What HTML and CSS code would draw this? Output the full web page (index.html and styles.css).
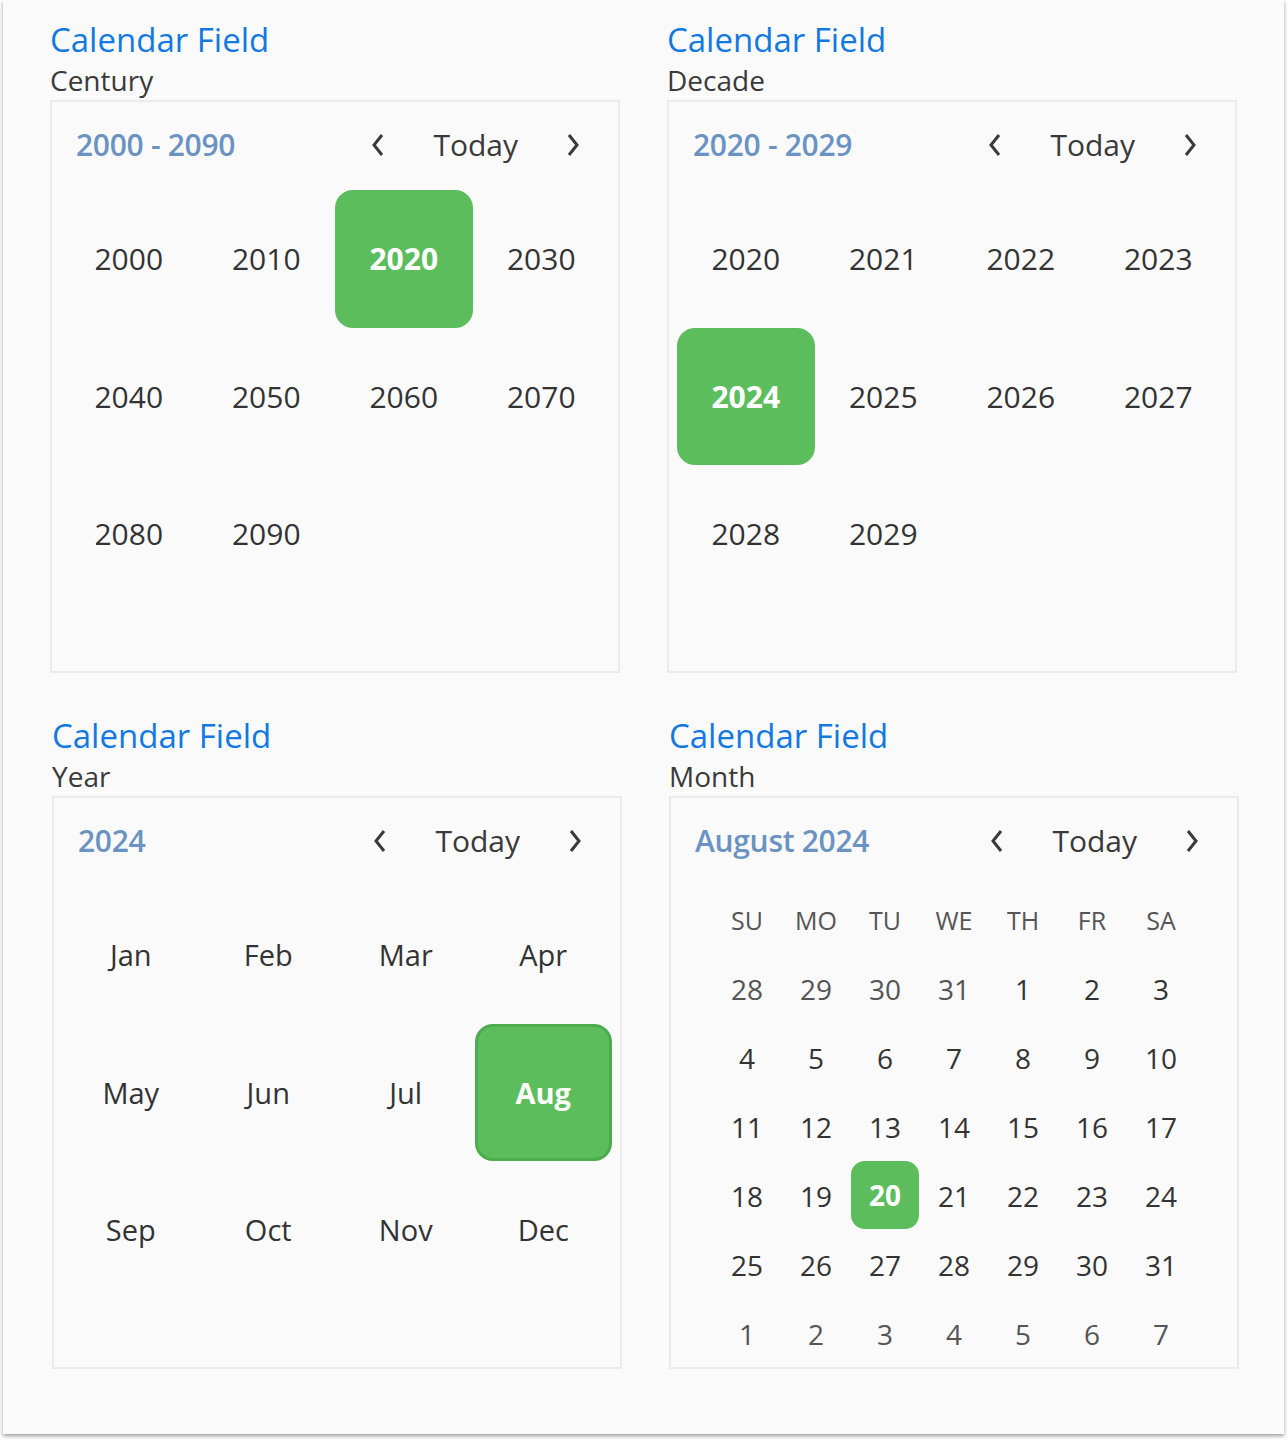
FILE: index.html
```html
<!DOCTYPE html>
<html lang="en">
<head>
  <meta charset="UTF-8">
  <meta name="viewport" content="width=device-width, initial-scale=1.0">
  <title>Calendar Field</title>
  <link rel="stylesheet" href="styles.css">
</head>
<body>
  <div class="panel">
    <div class="field">
      <div class="field_title">Calendar Field</div>
      <div class="field_sub">Century</div>
      <div class="calendar">
        <div class="cal_head">
          <div class="cal_title">2000 - 2090</div>
          <div class="cal_nav">
            <span class="nav_btn"><svg width="16" height="26" viewBox="0 0 16 26"><polyline points="12,3 4,13 12,23" /></svg></span>
            <span class="today">Today</span>
            <span class="nav_btn"><svg width="16" height="26" viewBox="0 0 16 26"><polyline points="4,3 12,13 4,23" /></svg></span>
          </div>
        </div>
        <div class="cal_grid big">
          <div class="cell">2000</div>
          <div class="cell">2010</div>
          <div class="cell selected">2020</div>
          <div class="cell">2030</div>
          <div class="cell">2040</div>
          <div class="cell">2050</div>
          <div class="cell">2060</div>
          <div class="cell">2070</div>
          <div class="cell">2080</div>
          <div class="cell">2090</div>
        </div>
      </div>
    </div>

    <div class="field">
      <div class="field_title">Calendar Field</div>
      <div class="field_sub">Decade</div>
      <div class="calendar">
        <div class="cal_head">
          <div class="cal_title">2020 - 2029</div>
          <div class="cal_nav">
            <span class="nav_btn"><svg width="16" height="26" viewBox="0 0 16 26"><polyline points="12,3 4,13 12,23" /></svg></span>
            <span class="today">Today</span>
            <span class="nav_btn"><svg width="16" height="26" viewBox="0 0 16 26"><polyline points="4,3 12,13 4,23" /></svg></span>
          </div>
        </div>
        <div class="cal_grid big">
          <div class="cell">2020</div>
          <div class="cell">2021</div>
          <div class="cell">2022</div>
          <div class="cell">2023</div>
          <div class="cell selected">2024</div>
          <div class="cell">2025</div>
          <div class="cell">2026</div>
          <div class="cell">2027</div>
          <div class="cell">2028</div>
          <div class="cell">2029</div>
        </div>
      </div>
    </div>

    <div class="field lower">
      <div class="field_title">Calendar Field</div>
      <div class="field_sub">Year</div>
      <div class="calendar">
        <div class="cal_head">
          <div class="cal_title">2024</div>
          <div class="cal_nav">
            <span class="nav_btn"><svg width="16" height="26" viewBox="0 0 16 26"><polyline points="12,3 4,13 12,23" /></svg></span>
            <span class="today">Today</span>
            <span class="nav_btn"><svg width="16" height="26" viewBox="0 0 16 26"><polyline points="4,3 12,13 4,23" /></svg></span>
          </div>
        </div>
        <div class="cal_grid big months">
          <div class="cell">Jan</div>
          <div class="cell">Feb</div>
          <div class="cell">Mar</div>
          <div class="cell">Apr</div>
          <div class="cell">May</div>
          <div class="cell">Jun</div>
          <div class="cell">Jul</div>
          <div class="cell selected focused">Aug</div>
          <div class="cell">Sep</div>
          <div class="cell">Oct</div>
          <div class="cell">Nov</div>
          <div class="cell">Dec</div>
        </div>
      </div>
    </div>

    <div class="field lower">
      <div class="field_title">Calendar Field</div>
      <div class="field_sub">Month</div>
      <div class="calendar">
        <div class="cal_head">
          <div class="cal_title">August 2024</div>
          <div class="cal_nav">
            <span class="nav_btn"><svg width="16" height="26" viewBox="0 0 16 26"><polyline points="12,3 4,13 12,23" /></svg></span>
            <span class="today">Today</span>
            <span class="nav_btn"><svg width="16" height="26" viewBox="0 0 16 26"><polyline points="4,3 12,13 4,23" /></svg></span>
          </div>
        </div>
        <div class="cal_grid days">
          <div class="wday">SU</div><div class="wday">MO</div><div class="wday">TU</div><div class="wday">WE</div><div class="wday">TH</div><div class="wday">FR</div><div class="wday">SA</div>
          <div class="cell other">28</div><div class="cell other">29</div><div class="cell other">30</div><div class="cell other">31</div><div class="cell">1</div><div class="cell">2</div><div class="cell">3</div>
          <div class="cell">4</div><div class="cell">5</div><div class="cell">6</div><div class="cell">7</div><div class="cell">8</div><div class="cell">9</div><div class="cell">10</div>
          <div class="cell">11</div><div class="cell">12</div><div class="cell">13</div><div class="cell">14</div><div class="cell">15</div><div class="cell">16</div><div class="cell">17</div>
          <div class="cell">18</div><div class="cell">19</div><div class="cell selected">20</div><div class="cell">21</div><div class="cell">22</div><div class="cell">23</div><div class="cell">24</div>
          <div class="cell">25</div><div class="cell">26</div><div class="cell">27</div><div class="cell">28</div><div class="cell">29</div><div class="cell">30</div><div class="cell">31</div>
          <div class="cell other">1</div><div class="cell other">2</div><div class="cell other">3</div><div class="cell other">4</div><div class="cell other">5</div><div class="cell other">6</div><div class="cell other">7</div>
        </div>
      </div>
    </div>
  </div>
</body>
</html>
```

FILE: styles.css
```css
* {margin: 0; padding: 0; box-sizing: border-box;}
body {background: #fff; font-family: "Open Sans", "Noto Sans", sans-serif; color: #333; padding-bottom: 9px;}

.panel {
  margin: 0 4px 0 3px;
  height: 1434px;
  padding: 20px 0 0 47px;
  background: #fafafa;
  box-shadow: 0 2px 4px rgba(0, 0, 0, 0.4);
  display: grid;
  grid-template-columns: 570px 570px;
  grid-template-rows: 653px 653px;
  column-gap: 47px;
  row-gap: 43px;
  align-content: start;
}

.field {width: 570px;}
.field.lower {margin-left: 2px;}

.field_title {font-size: 33px; line-height: 40px; color: #1279e2;}
.field_sub {font-size: 28px; line-height: 40px; color: #3a3a3a;}

.calendar {height: 573px; border: 2px solid #ebebeb; background: #fafafa;}

.cal_head {height: 87px; display: flex; align-items: center; justify-content: space-between; padding: 0 25px 0 24px;}
.cal_title {font-size: 30px; font-weight: 600; color: #6a93c4; letter-spacing: -0.3px; margin-top: -2px;}
.cal_nav {display: flex; align-items: center; margin-top: -2px;}
.nav_btn {width: 40px; height: 40px; display: flex; align-items: center; justify-content: center;}
.nav_btn svg polyline {fill: none; stroke: #3a3a3a; stroke-width: 3;}
.today {font-size: 30px; margin: 0 35px; color: #3a3a3a;}

.cal_grid {display: grid; justify-content: center;}
.cal_grid.big {grid-template-columns: repeat(4, 137.5px); grid-auto-rows: 137.5px; margin-top: 1px;}
.cal_grid.big .cell {font-size: 30px;}
.cal_grid.months .cell {font-size: 29px;}

.cell {display: flex; align-items: center; justify-content: center; color: #333;}
.cell.selected {background: #5cbd5c; color: #fff; font-weight: 700; border-radius: 18px;}
.cell.focused {border: 3px solid #4eab4e;}

.cal_grid.days {grid-template-columns: repeat(7, 69px); grid-auto-rows: 69px;}
.cal_grid.days .wday {display: flex; align-items: center; justify-content: center; font-size: 25px; color: #555;}
.cal_grid.days .cell {font-size: 28px;}
.cal_grid.days .cell.other {color: #555;}
.cal_grid.days .cell.selected {border-radius: 14px; margin: 0 0.5px 1px 0.5px;}
```
